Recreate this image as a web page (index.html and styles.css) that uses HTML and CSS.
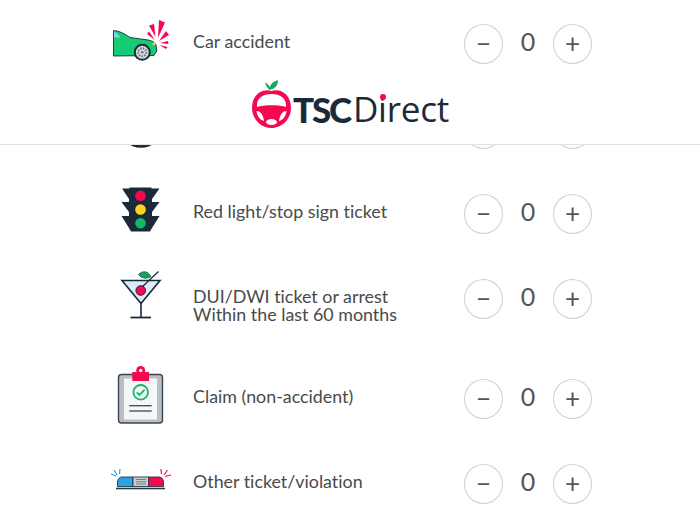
FILE: index.html
```html
<!DOCTYPE html>
<html lang="en">
<head>
<meta charset="utf-8">
<title>TSC Direct</title>
<link rel="stylesheet" href="styles.css">
</head>
<body>
<header class="site-header">
  <div class="logo">
    <svg class="logo-mark" viewBox="251 79 42 50" aria-hidden="true">
      <path d="M269.500 89 C267.500 87 266 84.500 264.700 81.500 C267.500 82.500 269.500 84.500 270.500 88Z" fill="#16a85a"/>
      <path d="M269.500 88.800 C269.500 84 272.500 80.500 278 79.300 C278 84.500 275 88 269.500 88.800Z" fill="#16a85a"/>
      <path d="M271.500 90 C279 87 291 92 291 107 C291 118 282 127 271.500 127 C261 127 252 118 252 107 C252 92 264 87 271.500 90Z" fill="#f4084f"/>
      <path d="M257 106 C256 97 263 93 271.500 93 C280 93 287 97 286 106 C280 103.500 263 103.500 257 106Z" fill="#fff"/>
      <path d="M256.500 110 C260 110 263 113 264 120 C260 119 257 115 256.500 110Z" fill="#fff"/>
      <path d="M286.500 110 C283 110 280 113 279 120 C283 119 286 115 286.500 110Z" fill="#fff"/>
      <ellipse cx="271.500" cy="121" rx="5.500" ry="3" fill="#fff"/>
    </svg>
    <span class="logo-strong">TSC</span><span class="logo-light">Direct</span>
    <i class="logo-dot"></i>
  </div>
</header>

<main class="list">
  <div class="row">
    <div class="icon">
      <svg class="art art-car" viewBox="110 18 65 44" aria-hidden="true">
        <path d="M113.500 30.500 C120 31 125 34 130 37.500 L148 40 C152 40.500 155 42.500 156 45 L156.800 51 L154 55.500 L113.500 56Z" fill="#14cc74" stroke="#1b2a3a" stroke-width=".9"/>
        <path d="M114 31.500 C115.500 32 118 34 120.500 37.500 L114 37.500Z" fill="#7fd0f2"/>
        <circle cx="154" cy="43.700" r="1.500" fill="#ffd21f"/>
        <circle cx="142.300" cy="52.300" r="7.500" fill="#d6dadd" stroke="#1b2a3a" stroke-width="2"/>
        <circle cx="142.300" cy="52.300" r="4" fill="none" stroke="#6d7680" stroke-width="2" stroke-dasharray="1.500 1.200"/>
        <circle cx="142.300" cy="52.300" r="1.300" fill="#6d7680"/>
        <g fill="#f4084f">
          <polygon points="149,25.500 154,24 155.500,37"/>
          <polygon points="159,20 165,22.500 158,38"/>
          <polygon points="166,31 169,35 159,41"/>
          <polygon points="168,41 168.500,44 160,43"/>
          <polygon points="167.500,47 166,49 159.500,45"/>
          <polygon points="147,34 149,31.500 155,40"/>
        </g>
      </svg>
    </div>
    <div class="label">Car accident</div>
    <div class="stepper"><button class="step" type="button">−</button><span class="count">0</span><button class="step" type="button">+</button></div>
  </div>

  <div class="row">
    <div class="icon">
      <svg class="art art-hidden" viewBox="0 0 44 44" aria-hidden="true">
        <circle cx="22" cy="22" r="20.500" fill="#e4e8ec" stroke="#1b2a3a" stroke-width="2.500"/>
      </svg>
    </div>
    <div class="label"></div>
    <div class="stepper"><button class="step" type="button">−</button><span class="count">0</span><button class="step" type="button">+</button></div>
  </div>

  <div class="row">
    <div class="icon">
      <svg class="art art-light" viewBox="120 186 41 47" aria-hidden="true">
        <path d="M122 188.500 H129 L130 187.500 H151 L152 188.500 H159.500 L152 199 V202 L159.500 202 L152 212 V216 L159.500 216 L152 228 L150 231.500 H131 L129 228 L121.500 216 H129 V212 L121.500 202 H129 V199Z" fill="#1b2a3a"/>
        <circle cx="140.500" cy="195.700" r="5.300" fill="#f4084f"/>
        <circle cx="140.500" cy="209.500" r="5.300" fill="#ffd21f"/>
        <circle cx="140.500" cy="223.300" r="5.300" fill="#11b866"/>
      </svg>
    </div>
    <div class="label">Red light/stop sign ticket</div>
    <div class="stepper"><button class="step" type="button">−</button><span class="count">0</span><button class="step" type="button">+</button></div>
  </div>

  <div class="row row-tall">
    <div class="icon">
      <svg class="art art-martini" viewBox="120 269 42 50" aria-hidden="true">
        <polygon points="122,280.500 160,280.500 141,303.500" fill="#dcebf7" stroke="#1b2a3a" stroke-width="1.600"/>
        <line x1="141" y1="303.500" x2="141" y2="317.500" stroke="#1b2a3a" stroke-width="1.600"/>
        <line x1="130.500" y1="317.500" x2="151" y2="317.500" stroke="#1b2a3a" stroke-width="1.800"/>
        <line x1="141" y1="288" x2="158.500" y2="271.500" stroke="#1b2a3a" stroke-width="1.300"/>
        <path d="M138.500 274.500 C142 270.500 148 270.500 151 276.500 C147 279 142 279 138.500 274.500Z" fill="#11a85c" stroke="#1b2a3a" stroke-width=".6"/>
        <circle cx="140.700" cy="290.500" r="4.800" fill="#f4084f" stroke="#1b2a3a" stroke-width="1"/>
      </svg>
    </div>
    <div class="label">DUI/DWI ticket or arrest<br>Within the last 60 months</div>
    <div class="stepper"><button class="step" type="button">−</button><span class="count">0</span><button class="step" type="button">+</button></div>
  </div>

  <div class="row">
    <div class="icon">
      <svg class="art art-clip" viewBox="117 365 47 60" aria-hidden="true">
        <rect x="118.500" y="374.500" width="44" height="48.500" rx="3" fill="#b9bfc5" stroke="#3c4650" stroke-width="1.400"/>
        <rect x="124" y="378.500" width="33" height="41" fill="#f5f6f7"/>
        <circle cx="140.700" cy="370.500" r="4.500" fill="#f4084f"/>
        <rect x="132.300" y="372" width="16.700" height="9" fill="#f4084f"/>
        <circle cx="140.700" cy="370.500" r="1.700" fill="#fff"/>
        <circle cx="140.700" cy="392.300" r="7.300" fill="none" stroke="#11b866" stroke-width="1.800"/>
        <path d="M136.800 392.300 L139.500 395 L144.600 389.700" fill="none" stroke="#11b866" stroke-width="1.800"/>
        <line x1="129.300" y1="405.700" x2="151.700" y2="405.700" stroke="#3c4650" stroke-width="1.300"/>
        <line x1="129.300" y1="411" x2="151.700" y2="411" stroke="#3c4650" stroke-width="1.300"/>
      </svg>
    </div>
    <div class="label">Claim (non-accident)</div>
    <div class="stepper"><button class="step" type="button">−</button><span class="count">0</span><button class="step" type="button">+</button></div>
  </div>

  <div class="row">
    <div class="icon">
      <svg class="art art-siren" viewBox="110 468 62 23" aria-hidden="true">
        <path d="M117.500 486.500 V482 C117.500 479 119.500 477 122 477 H133 V486.500Z" fill="#27a4e2" stroke="#2b3947" stroke-width=".9"/>
        <rect x="133" y="477" width="15.500" height="9.500" fill="#c9cdd1" stroke="#2b3947" stroke-width=".9"/>
        <path d="M148.500 477 H159 C161.500 477 163.500 479 163.500 482 V486.500 H148.500Z" fill="#f4084f" stroke="#2b3947" stroke-width=".9"/>
        <g stroke="#6d7680" stroke-width=".9"><line x1="136" y1="479.500" x2="146" y2="479.500"/><line x1="136" y1="481.800" x2="146" y2="481.800"/><line x1="136" y1="484" x2="146" y2="484"/></g>
        <rect x="116" y="487.700" width="49" height="1.600" fill="#2b3947"/>
        <g stroke="#27a4e2" stroke-width="1.200"><line x1="111" y1="474" x2="116" y2="476"/><line x1="114" y1="470" x2="117" y2="475"/><line x1="120" y1="469" x2="119.500" y2="474"/></g>
        <g stroke="#f4084f" stroke-width="1.200"><line x1="171" y1="475" x2="165" y2="476.500"/><line x1="167.500" y1="470" x2="164" y2="475"/><line x1="161" y1="469" x2="161.500" y2="474"/></g>
      </svg>
    </div>
    <div class="label">Other ticket/violation</div>
    <div class="stepper"><button class="step" type="button">−</button><span class="count">0</span><button class="step" type="button">+</button></div>
  </div>
</main>
</body>
</html>
```

FILE: styles.css
```css
* { box-sizing: border-box; }
html, body { margin: 0; padding: 0; background: #fff; }
body {
  position: relative;
  height: 525px;
  overflow: hidden;
  font-family: "Lato", sans-serif;
  font-variant-ligatures: none;
  color: #4a4a4a;
}

.site-header {
  position: absolute;
  top: 70px;
  left: 0;
  right: 0;
  height: 75px;
  background: #fff;
  border-bottom: 1px solid #e2e2e2;
  z-index: 2;
}
.logo {
  position: absolute;
  top: 9px;
  left: 251px;
  display: flex;
  align-items: center;
  height: 52px;
  color: #1b2a3a;
}
.logo-mark { width: 42px; height: 50px; flex: none; }
.logo-strong {
  margin-left: 0;
  margin-top: 7px;
  font: 900 35px/40px "Lato", sans-serif;
  letter-spacing: -2.2px;
}
.logo-light {
  margin-left: 3px;
  margin-top: 7px;
  font: 400 35px/40px "Open Sans", sans-serif;
  letter-spacing: -.2px;
}
.logo-dot {
  position: absolute;
  left: 129px;
  top: 15px;
  width: 6px;
  height: 6px;
  border-radius: 50%;
  background: #f4084f;
}

.list {
  display: flex;
  flex-direction: column;
  gap: 45px;
  padding: 24px 108px 0 105px;
}
.row {
  display: flex;
  align-items: flex-start;
  height: 40px;
}
.row-tall { height: 55px; }
.icon {
  position: relative;
  flex: none;
  width: 88px;
  height: 40px;
}
.art { position: absolute; display: block; }
.art-car { left: 5px; top: -6px; width: 65px; height: 44px; }
.art-hidden { left: 14px; top: -5px; width: 44px; height: 44px; }
.art-light { left: 15px; top: -8px; width: 41px; height: 47px; }
.art-martini { left: 15px; top: -10px; width: 42px; height: 50px; }
.art-clip { left: 12px; top: -14px; width: 47px; height: 60px; }
.art-siren { left: 5px; top: 4px; width: 62px; height: 23px; }

.label {
  flex: 1;
  padding-top: 8px;
  font-size: 17.85px;
  line-height: 18px;
  color: #4a4a4a;
}
.stepper {
  flex: none;
  display: flex;
  align-items: flex-start;
  justify-content: space-between;
  width: 128px;
}
.step {
  width: 39px;
  height: 40px;
  padding: 0 0 2px;
  border: 1px solid #cfcfcf;
  border-radius: 50%;
  background: #fff;
  color: #555;
  font: 400 26px/1 "Lato", sans-serif;
}
.count {
  font-size: 25px;
  line-height: 35px;
  color: #555;
}
```
